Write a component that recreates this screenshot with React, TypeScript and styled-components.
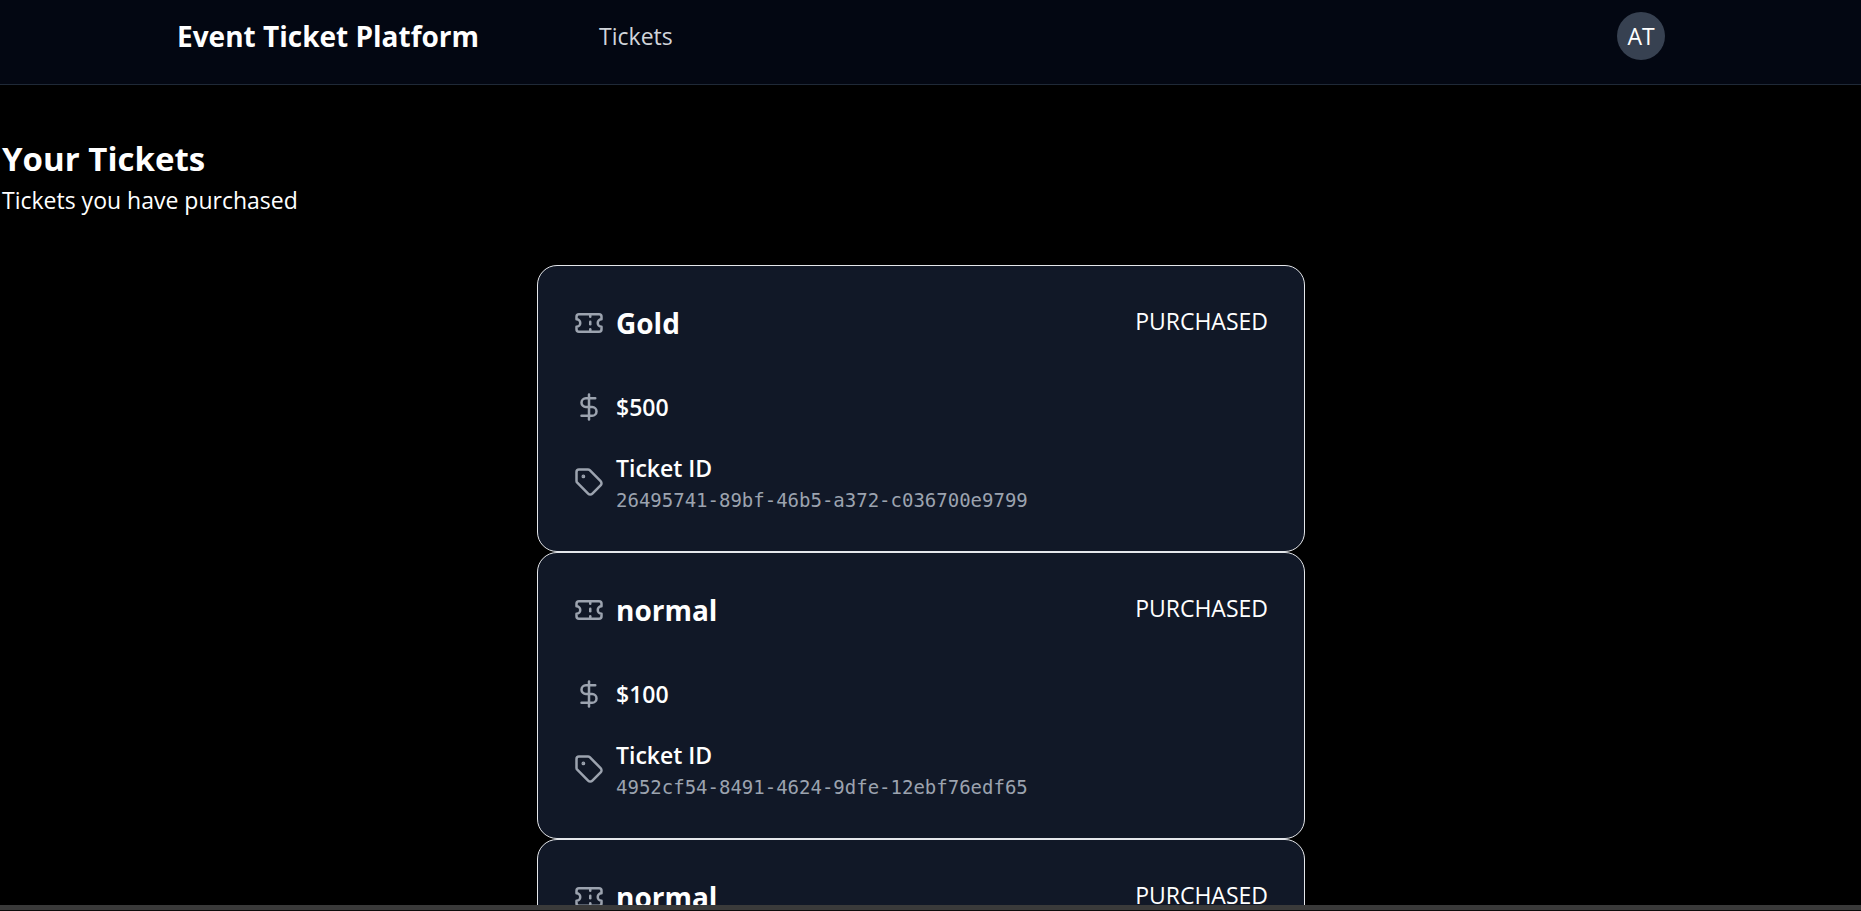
import React from 'react';
import styled, { createGlobalStyle } from 'styled-components';
import { DollarSign, Tag, Ticket } from 'lucide-react';

const GlobalStyle = createGlobalStyle`
  *, *::before, *::after { box-sizing: border-box; }
  body {
    margin: 0;
    background: #000;
    color: #fff;
    font-family: 'Segoe UI', 'Open Sans', 'Noto Sans', sans-serif;
    font-size: 23px;
    line-height: 36px;
  }
  h1, h2, h3, p, ul { margin: 0; padding: 0; }
`;

const Page = styled.div`
  display: flex;
  flex-direction: column;
  height: 100vh;
`;

const Viewport = styled.div`
  flex: 1;
  min-height: 0;
  overflow: hidden;
`;

const BottomEdge = styled.div`
  flex: none;
  height: 6px;
  background: #3a3a3a;
  border-bottom: 1px solid #0c0c0c;
`;

const Header = styled.header`
  background: #030712;
  border-bottom: 1px solid #1f2937;
  padding-right: 19px;
`;

const HeaderInner = styled.div`
  display: flex;
  align-items: center;
  max-width: 1536px;
  margin: 0 auto;
  padding: 12px 24px 24px;
`;

const Brand = styled.h1`
  font-size: 28px;
  font-weight: 700;
  line-height: 38px;
  margin-right: 120px;
`;

const NavLink = styled.a`
  color: #d1d5db;
  text-decoration: none;
`;

const Avatar = styled.button`
  width: 48px;
  height: 48px;
  margin-left: auto;
  padding: 0;
  border: 0;
  border-radius: 50%;
  background: #374151;
  color: #fff;
  font: inherit;
`;

const Main = styled.main`
  padding-right: 19px;
`;

const Intro = styled.section`
  padding: 51px 2px 47px;
`;

const PageTitle = styled.h2`
  font-size: 33px;
  font-weight: 700;
  line-height: 46px;
`;

const TicketList = styled.ul`
  max-width: 768px;
  margin: 0 auto;
  list-style: none;
`;

const Card = styled.li`
  height: 287px;
  padding: 36px;
  border: 1px solid #e5e7eb;
  border-radius: 20px;
  background: #111827;
`;

const CardHeader = styled.div`
  display: flex;
  justify-content: space-between;
  align-items: flex-start;
  margin-bottom: 45px;
`;

const Row = styled.div`
  display: flex;
  align-items: center;
  gap: 12px;

  & + & { margin-top: 25px; }

  svg {
    flex: none;
    color: #9ca3af;
  }
`;

const TicketName = styled.h3`
  font-size: 28px;
  font-weight: 700;
  line-height: 42px;
`;

const Status = styled.span`
  line-height: 38px;
`;

const Strong = styled.p`
  font-weight: 600;
`;

const TicketCode = styled.p`
  color: #9ca3af;
  font-family: Consolas, 'DejaVu Sans Mono', monospace;
  font-size: 19px;
  line-height: 28px;
`;

interface TicketData {
  id: string;
  name: string;
  price: number;
  status: string;
}

const tickets: TicketData[] = [
  { id: '26495741-89bf-46b5-a372-c036700e9799', name: 'Gold', price: 500, status: 'PURCHASED' },
  { id: '4952cf54-8491-4624-9dfe-12ebf76edf65', name: 'normal', price: 100, status: 'PURCHASED' },
];

function TicketHeading({ name, status }: { name: string; status: string }) {
  return (
    <CardHeader>
      <Row>
        <Ticket size={30} />
        <TicketName>{name}</TicketName>
      </Row>
      <Status>{status}</Status>
    </CardHeader>
  );
}

function TicketCard({ ticket }: { ticket: TicketData }) {
  return (
    <Card>
      <TicketHeading name={ticket.name} status={ticket.status} />
      <Row>
        <DollarSign size={30} />
        <Strong>${ticket.price}</Strong>
      </Row>
      <Row>
        <Tag size={30} />
        <div>
          <Strong>Ticket ID</Strong>
          <TicketCode>{ticket.id}</TicketCode>
        </div>
      </Row>
    </Card>
  );
}

export default function App() {
  return (
    <Page>
      <GlobalStyle />
      <Viewport>
        <Header>
          <HeaderInner>
            <Brand>Event Ticket Platform</Brand>
            <nav>
              <NavLink href="#tickets">Tickets</NavLink>
            </nav>
            <Avatar type="button">AT</Avatar>
          </HeaderInner>
        </Header>
        <Main>
          <Intro>
            <PageTitle>Your Tickets</PageTitle>
            <p>Tickets you have purchased</p>
          </Intro>
          <TicketList id="tickets">
            {tickets.map((ticket) => (
              <TicketCard key={ticket.id} ticket={ticket} />
            ))}
            <Card>
              <TicketHeading name="normal" status="PURCHASED" />
            </Card>
          </TicketList>
        </Main>
      </Viewport>
      <BottomEdge />
    </Page>
  );
}
